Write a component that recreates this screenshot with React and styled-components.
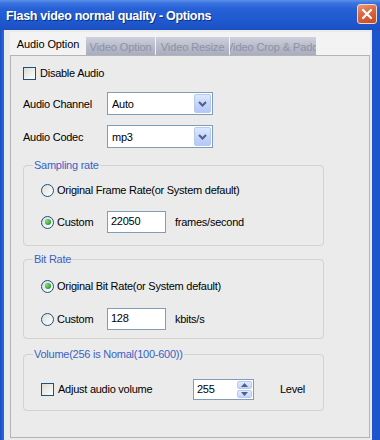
import React from 'react';
import styled, { createGlobalStyle } from 'styled-components';

const Global = createGlobalStyle`
  html, body { margin: 0; padding: 0; background: #ffffff; }
  body { font-family: "Liberation Sans", Arial, sans-serif; }
  #root { width: 380px; height: 440px; }
`;

const Window = styled.div`
  width: 380px;
  height: 440px;
  overflow: hidden;
  display: flex;
  flex-direction: column;
  background: #1d55cc;
`;

const TitleBar = styled.div`
  height: 30px;
  flex: none;
  display: flex;
  align-items: center;
  justify-content: space-between;
  padding: 0 3px 0 6px;
  box-sizing: border-box;
  background: linear-gradient(180deg, #5d92ea 0%, #3a74e0 10%, #2660d6 30%, #1f58cf 70%, #1a50c2 100%);
`;

const Title = styled.div`
  color: #ffffff;
  font-weight: bold;
  font-size: 12.5px;
  letter-spacing: -0.3px;
  text-shadow: 1px 1px 0 #0c2f80;
  padding-top: 1px;
`;

const CloseButton = styled.div`
  width: 20px;
  height: 20px;
  box-sizing: border-box;
  border: 1px solid #f4d8cc;
  border-radius: 3px;
  background: linear-gradient(160deg, #eb9a78 0%, #db6a45 40%, #c84a22 100%);
  display: flex;
  align-items: center;
  justify-content: center;
  margin-bottom: 3px;
`;

const Frame = styled.div`
  flex: 1;
  display: flex;
  padding: 0 8px 0 4px;
  background: linear-gradient(90deg, #1a4fc4 0px, #2b63d8 3px, #1d55cc 100%);
  min-height: 0;
`;

const Body = styled.div`
  flex: 1;
  display: flex;
  flex-direction: column;
  background: #ebebeb;
  padding: 2px 2px 2px 6px;
`;

const TabStrip = styled.div`
  height: 23px;
  flex: none;
  display: flex;
  align-items: flex-end;
  gap: 1px;
  padding-left: 1px;
  background: #f3f3f3;
`;

const Tab = styled.div`
  width: ${p => p.$w}px;
  height: ${p => (p.$active ? 22 : 18)}px;
  flex: none;
  display: flex;
  align-items: center;
  justify-content: ${p => (p.$clip ? 'flex-start' : 'center')};
  overflow: hidden;
  white-space: nowrap;
  font-size: 11px;
  letter-spacing: -0.1px;
  color: ${p => (p.$active ? '#000000' : '#8d92a5')};
  background: ${p =>
    p.$active
      ? '#f3f3f3'
      : 'linear-gradient(180deg, #cfd1dc 0%, #b9bcca 50%, #a9adbf 100%)'};
  box-sizing: border-box;
  padding-top: ${p => (p.$active ? 0 : 1)}px;
`;

const TabText = styled.span`
  margin-left: ${p => p.$shift || 0}px;
  flex: none;
`;

const Panel = styled.div`
  flex: 1;
  border: 1px solid #b4b4b4;
  background: #ebebeb;
  display: flex;
  flex-direction: column;
  padding: 6px 0 0 12px;
  font-size: 11px;
  letter-spacing: -0.25px;
  color: #000;
`;

const CheckRow = styled.label`
  height: 22px;
  display: flex;
  align-items: center;
  gap: 4px;
  width: ${p => (p.$w ? `${p.$w}px` : 'auto')};
  flex: none;
`;

const CheckBox = styled.span`
  width: 13px;
  height: 13px;
  box-sizing: border-box;
  border: 1px solid #1c5180;
  background: linear-gradient(135deg, #dcdcd6 0%, #f4f4f2 70%, #ffffff 100%);
  flex: none;
`;

const FieldRow = styled.div`
  height: 23px;
  display: flex;
  align-items: center;
  margin-top: ${p => p.$mt}px;
`;

const FieldLabel = styled.span`
  width: 84px;
  flex: none;
`;

const Select = styled.div`
  width: 106px;
  height: 23px;
  box-sizing: border-box;
  border: 1px solid #7f9db9;
  background: #fff;
  display: flex;
  align-items: center;
  justify-content: space-between;
  padding: 0 1px 0 4px;
`;

const DropButton = styled.div`
  width: 17px;
  height: 19px;
  box-sizing: border-box;
  border: 1px solid #b6c9f2;
  border-radius: 2px;
  background: linear-gradient(180deg, #dfe8fd 0%, #c6d5fb 50%, #b5c8f6 100%);
  display: flex;
  align-items: center;
  justify-content: center;
`;

const Group = styled.div`
  position: relative;
  width: 301px;
  box-sizing: border-box;
  border: 1px solid #d3d3c8;
  border-radius: 4px;
  margin-top: ${p => p.$mt}px;
  padding: ${p => p.$pad};
  display: flex;
  flex-direction: column;
  gap: ${p => p.$gap}px;
`;

const Legend = styled.span`
  position: absolute;
  top: -8px;
  left: 9px;
  padding: 0 1px;
  background: #ebebeb;
  color: #3a62c4;
  line-height: 14px;
`;

const OptionRow = styled.div`
  height: 22px;
  display: flex;
  align-items: center;
`;

const RadioLabel = styled.label`
  display: flex;
  align-items: center;
  gap: 3px;
  width: ${p => (p.$w ? `${p.$w}px` : 'auto')};
  flex: none;
`;

const Radio = styled.span`
  width: 13px;
  height: 13px;
  box-sizing: border-box;
  border-radius: 50%;
  border: 1px solid #1c5180;
  background: linear-gradient(135deg, #dcdcd6 0%, #f5f5f3 70%, #ffffff 100%);
  display: flex;
  align-items: center;
  justify-content: center;
  flex: none;
  &::after {
    content: '';
    display: ${p => (p.$checked ? 'block' : 'none')};
    width: 6px;
    height: 6px;
    border-radius: 50%;
    background: radial-gradient(circle at 35% 35%, #86dc86 0%, #35a935 60%, #1f831f 100%);
  }
`;

const TextBox = styled.div`
  width: 59px;
  height: 22px;
  box-sizing: border-box;
  border: 1px solid #7f9db9;
  background: #fff;
  padding: 3px 3px 0;
  flex: none;
`;

const Unit = styled.span`
  margin-left: 9px;
`;

const Spin = styled.div`
  width: 61px;
  height: 21px;
  box-sizing: border-box;
  border: 1px solid #7f9db9;
  background: #fff;
  display: flex;
  justify-content: space-between;
  padding: 1px 1px 1px 3px;
  flex: none;
`;

const SpinText = styled.span`
  padding-top: 2px;
`;

const SpinButtons = styled.div`
  display: flex;
  flex-direction: column;
  gap: 1px;
  width: 15px;
`;

const SpinButton = styled.div`
  flex: 1;
  border: 1px solid #b6c9f2;
  border-radius: 2px;
  background: linear-gradient(180deg, #e2eafd 0%, #c5d4fb 100%);
  display: flex;
  align-items: center;
  justify-content: center;
`;

const LevelText = styled.span`
  margin-left: 26px;
`;

const Chevron = () => (
  <svg width="9" height="6" viewBox="0 0 9 6">
    <path d="M1 1 L4.5 4.5 L8 1" fill="none" stroke="#4d6185" strokeWidth="2" />
  </svg>
);

const Tri = ({ up }) => (
  <svg width="7" height="4" viewBox="0 0 7 4">
    <path d={up ? 'M0 4 L3.5 0 L7 4 Z' : 'M0 0 L3.5 4 L7 0 Z'} fill="#4d6185" />
  </svg>
);

export default function App() {
  return (
    <>
      <Global />
      <Window>
        <TitleBar>
          <Title>Flash video normal quality - Options</Title>
          <CloseButton>
            <svg width="12" height="12" viewBox="0 0 12 12">
              <path d="M2 2 L10 10 M10 2 L2 10" stroke="#fff" strokeWidth="2.2" strokeLinecap="round" />
            </svg>
          </CloseButton>
        </TitleBar>
        <Frame>
          <Body>
            <TabStrip>
              <Tab $active $w={74}>Audio Option</Tab>
              <Tab $w={69}>Video Option</Tab>
              <Tab $w={73}>Video Resize</Tab>
              <Tab $w={86} $clip>
                <TabText $shift={-4}>Video Crop &amp; Padding</TabText>
              </Tab>
            </TabStrip>
            <Panel>
              <CheckRow>
                <CheckBox />
                Disable Audio
              </CheckRow>
              <FieldRow $mt={8}>
                <FieldLabel>Audio Channel</FieldLabel>
                <Select>
                  Auto
                  <DropButton><Chevron /></DropButton>
                </Select>
              </FieldRow>
              <FieldRow $mt={10}>
                <FieldLabel>Audio Codec</FieldLabel>
                <Select>
                  mp3
                  <DropButton><Chevron /></DropButton>
                </Select>
              </FieldRow>

              <Group $mt={17} $pad="13px 17px 12px" $gap={10}>
                <Legend>Sampling rate</Legend>
                <OptionRow>
                  <RadioLabel><Radio />Original Frame Rate(or System default)</RadioLabel>
                </OptionRow>
                <OptionRow>
                  <RadioLabel $w={66}><Radio $checked />Custom</RadioLabel>
                  <TextBox>22050</TextBox>
                  <Unit>frames/second</Unit>
                </OptionRow>
              </Group>

              <Group $mt={13} $pad="15px 17px 8px" $gap={11}>
                <Legend>Bit Rate</Legend>
                <OptionRow>
                  <RadioLabel><Radio $checked />Original Bit Rate(or System default)</RadioLabel>
                </OptionRow>
                <OptionRow>
                  <RadioLabel $w={66}><Radio />Custom</RadioLabel>
                  <TextBox>128</TextBox>
                  <Unit>kbits/s</Unit>
                </OptionRow>
              </Group>

              <Group $mt={15} $pad="23px 17px 10px" $gap={0}>
                <Legend>Volume(256 is Nomal(100-600))</Legend>
                <OptionRow>
                  <CheckRow $w={152}>
                    <CheckBox />
                    Adjust audio volume
                  </CheckRow>
                  <Spin>
                    <SpinText>255</SpinText>
                    <SpinButtons>
                      <SpinButton><Tri up /></SpinButton>
                      <SpinButton><Tri /></SpinButton>
                    </SpinButtons>
                  </Spin>
                  <LevelText>Level</LevelText>
                </OptionRow>
              </Group>
            </Panel>
          </Body>
        </Frame>
      </Window>
    </>
  );
}
